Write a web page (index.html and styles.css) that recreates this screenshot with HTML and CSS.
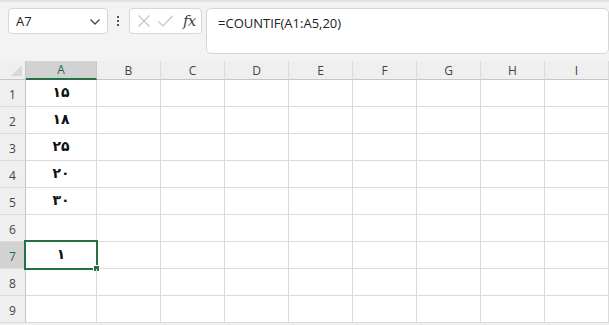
FILE: index.html
```html
<!DOCTYPE html>
<html>
<head>
<meta charset="utf-8">
<link rel="stylesheet" href="styles.css">
</head>
<body>
<div class="toolbar">
  <div class="namebox">
    <span class="name">A7</span>
    <svg class="chev" width="12" height="8" viewBox="0 0 12 8"><path d="M1.5 1.5 L6 6 L10.5 1.5" fill="none" stroke="#444" stroke-width="1.3"/></svg>
  </div>
  <div class="dots"><i></i><i></i><i></i></div>
  <div class="fxbox">
    <svg width="14" height="14" viewBox="0 0 14 14"><path d="M1.5 1.5 L12.5 12.5 M12.5 1.5 L1.5 12.5" stroke="#c4c4c4" stroke-width="1.2" fill="none"/></svg>
    <svg width="17" height="14" viewBox="0 0 17 14"><path d="M1.5 7.5 L6 12 L15.5 2" stroke="#c4c4c4" stroke-width="1.2" fill="none"/></svg>
    <span class="fx">fx</span>
  </div>
  <div class="formula">=COUNTIF(A1:A5,20)</div>
</div>
<div class="sheet">
  <div class="grid">
    <div class="corner"><span class="tri"></span></div>
    <div class="ch sel">A</div><div class="ch">B</div><div class="ch">C</div><div class="ch">D</div><div class="ch">E</div><div class="ch">F</div><div class="ch">G</div><div class="ch">H</div><div class="ch">I</div>

    <div class="rh">1</div><div class="c v">۱۵</div><div class="c"></div><div class="c"></div><div class="c"></div><div class="c"></div><div class="c"></div><div class="c"></div><div class="c"></div><div class="c"></div>
    <div class="rh">2</div><div class="c v">۱۸</div><div class="c"></div><div class="c"></div><div class="c"></div><div class="c"></div><div class="c"></div><div class="c"></div><div class="c"></div><div class="c"></div>
    <div class="rh">3</div><div class="c v">۲۵</div><div class="c"></div><div class="c"></div><div class="c"></div><div class="c"></div><div class="c"></div><div class="c"></div><div class="c"></div><div class="c"></div>
    <div class="rh">4</div><div class="c v">۲۰</div><div class="c"></div><div class="c"></div><div class="c"></div><div class="c"></div><div class="c"></div><div class="c"></div><div class="c"></div><div class="c"></div>
    <div class="rh">5</div><div class="c v">۳۰</div><div class="c"></div><div class="c"></div><div class="c"></div><div class="c"></div><div class="c"></div><div class="c"></div><div class="c"></div><div class="c"></div>
    <div class="rh">6</div><div class="c v"></div><div class="c"></div><div class="c"></div><div class="c"></div><div class="c"></div><div class="c"></div><div class="c"></div><div class="c"></div><div class="c"></div>
    <div class="rh selrow">7</div><div class="c v active">۱<span class="selbox"><span class="handle"></span></span></div><div class="c"></div><div class="c"></div><div class="c"></div><div class="c"></div><div class="c"></div><div class="c"></div><div class="c"></div><div class="c"></div>
    <div class="rh">8</div><div class="c v"></div><div class="c"></div><div class="c"></div><div class="c"></div><div class="c"></div><div class="c"></div><div class="c"></div><div class="c"></div><div class="c"></div>
    <div class="rh">9</div><div class="c v"></div><div class="c"></div><div class="c"></div><div class="c"></div><div class="c"></div><div class="c"></div><div class="c"></div><div class="c"></div><div class="c"></div>
  </div>
</div>
</body>
</html>
```
FILE: styles.css
```css
html, body {
  margin: 0;
  padding: 0;
  background: #f0f0f0;
  overflow: hidden;
  width: 609px;
  height: 325px;
  font-family: "Open Sans", "Noto Sans", sans-serif;
}
.toolbar {
  box-sizing: border-box;
  height: 61px;
  border-top: 2px solid #e2e2e2;
  padding: 6px 0 0 8px;
  display: flex;
  align-items: flex-start;
  background: #f3f3f3;
}
.namebox {
  box-sizing: border-box;
  width: 102px;
  height: 26px;
  background: #fff;
  border: 1px solid #d6d6d6;
  border-radius: 4px;
  display: flex;
  align-items: center;
  justify-content: space-between;
  padding: 0 6px 0 7px;
}
.name {
  font-size: 13px;
  color: #222;
}
.chev { margin-top: 1px; }
.dots {
  width: 20px;
  height: 26px;
  display: flex;
  flex-direction: column;
  align-items: center;
  justify-content: center;
  gap: 2px;
}
.dots i {
  display: block;
  width: 2px;
  height: 2px;
  background: #555;
}
.fxbox {
  box-sizing: border-box;
  width: 74px;
  height: 26px;
  margin-left: 1px;
  background: #fff;
  border: 1px solid #d6d6d6;
  border-radius: 4px;
  display: flex;
  align-items: center;
  padding: 0 4px 0 7px;
  gap: 6px;
}
.fx {
  font-family: "DejaVu Serif", "Liberation Serif", serif;
  font-style: italic;
  font-size: 15px;
  color: #444;
  margin-left: 3px;
  letter-spacing: -1px;
}
.formula {
  box-sizing: border-box;
  margin-left: 4px;
  width: 410px;
  height: 46px;
  background: #fff;
  border: 1px solid #d6d6d6;
  border-radius: 5px;
  padding: 5px 0 0 11px;
  font-size: 13px;
  color: #222;
  font-family: "Open Sans", sans-serif;
}
.sheet {
  background: #fff;
}
.grid {
  display: grid;
  grid-template-columns: 26px 71px repeat(8, 64px);
  grid-template-rows: 19px repeat(9, 27px);
}
.corner {
  background: #efefef;
  border-right: 1px solid #c6c6c6;
  border-bottom: 1px solid #c6c6c6;
  position: relative;
}
.tri {
  position: absolute;
  right: 3px;
  bottom: 3px;
  width: 0;
  height: 0;
  border-left: 11px solid transparent;
  border-bottom: 11px solid #d9d9d9;
}
.ch {
  background: #efefef;
  border-right: 1px solid #dadada;
  border-bottom: 1px solid #c6c6c6;
  font-size: 12px;
  color: #444;
  display: flex;
  align-items: center;
  justify-content: center;
}
.ch.sel {
  background: #d2d2d2;
  color: #1d6d42;
  border-bottom: 2px solid #217346;
  border-right-color: #c6c6c6;
}
.rh {
  background: #efefef;
  border-right: 1px solid #c6c6c6;
  border-bottom: 1px solid #dadada;
  font-size: 12px;
  color: #444;
  display: flex;
  align-items: flex-end;
  justify-content: center;
  padding-bottom: 3px;
  box-sizing: border-box;
}
.rh.selrow {
  background: #d2d2d2;
  color: #1d6d42;
}
.c {
  border-right: 1px solid #dadada;
  border-bottom: 1px solid #dadada;
  box-sizing: border-box;
}
.v {
  position: relative;
  display: flex;
  align-items: flex-start;
  justify-content: center;
  padding-top: 4px;
  font-family: "DejaVu Sans", sans-serif;
  font-weight: bold;
  font-size: 14px;
  color: #111;
}
.selbox {
  position: absolute;
  left: -2px;
  top: -2px;
  right: -2px;
  bottom: -2px;
  border: 2px solid #217346;
  pointer-events: none;
}
.handle {
  position: absolute;
  right: -4px;
  bottom: -4px;
  width: 5px;
  height: 5px;
  background: #217346;
  border: 1px solid #fff;
}
```
